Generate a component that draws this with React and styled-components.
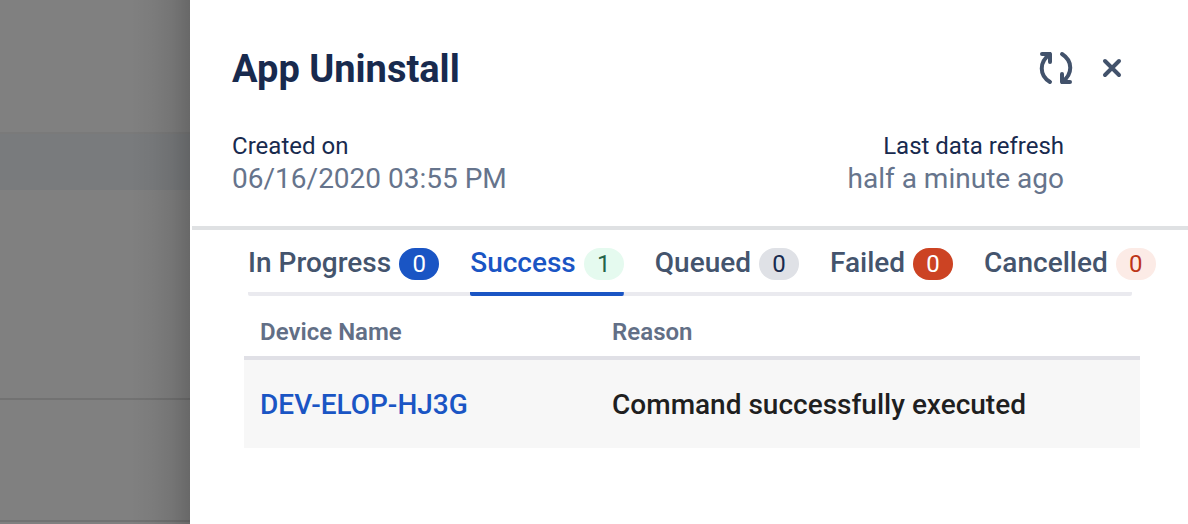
import React from "react";
import styled, { createGlobalStyle } from "styled-components";

const GlobalStyle = createGlobalStyle`
  *, *::before, *::after { box-sizing: border-box; }
  body {
    margin: 0;
    background: #808080;
    font-family: "Roboto", "Liberation Sans", sans-serif;
    color: #1b2a4e;
    overflow-x: hidden;
  }
  h1, p, dl, dd { margin: 0; }
  button { font: inherit; color: inherit; border: 0; padding: 0; background: none; cursor: pointer; }
`;

const Screen = styled.div`
  display: flex;
  min-height: 100vh;
`;

const Backdrop = styled.div`
  position: relative;
  flex: 0 0 16%;
  background: #808080;

  &::after {
    content: "";
    position: absolute;
    inset: 0 0 0 auto;
    width: 60px;
    background: linear-gradient(
      to right,
      rgba(0, 0, 0, 0),
      rgba(0, 0, 0, 0.03) 35%,
      rgba(0, 0, 0, 0.09) 70%,
      rgba(0, 0, 0, 0.19)
    );
  }
`;

const BackdropRow = styled.div`
  height: ${(p) => p.$height}px;
  border-bottom: 2px solid ${(p) => p.$line || "transparent"};
  background: ${(p) => p.$fill || "transparent"};
`;

const Drawer = styled.main`
  flex: 1;
  min-width: 0;
  background: #ffffff;
`;

const Header = styled.header`
  margin-left: 2px;
  padding: 44px 64px 30px 40px;
  border-bottom: 4px solid #dfe1e3;
`;

const TitleBar = styled.div`
  display: flex;
  align-items: flex-start;
  justify-content: space-between;
  height: 48px;
`;

const Title = styled.h1`
  font-size: 38px;
  line-height: 50px;
  font-weight: 700;
  color: #182a4e;
`;

const Actions = styled.div`
  display: flex;
  gap: 24px;
  padding: 4px 0;
  color: #42526b;
`;

const IconButton = styled.button`
  display: flex;
  svg {
    fill: none;
    stroke: currentColor;
    stroke-width: 4;
    stroke-linecap: round;
    stroke-linejoin: round;
  }
`;

const Facts = styled.dl`
  display: flex;
  justify-content: space-between;
  margin-top: 38px;
  padding-right: 60px;
`;

const Fact = styled.div`
  text-align: ${(p) => p.$align || "left"};
  dt { font-size: 24px; line-height: 32px; color: #182a4e; }
  dd { font-size: 28px; line-height: 34px; color: #66748c; }
`;

const Body = styled.div`
  padding: 18px 48px 32px 54px;
`;

const Tabs = styled.div`
  display: flex;
  gap: 31px;
  height: 48px;
  margin: 0 8px 0 4px;
  border-radius: 2px;
  background: linear-gradient(#eaeaef, #eaeaef) bottom / 100% 4px no-repeat;
`;

const Tab = styled.button`
  display: flex;
  align-items: flex-start;
  gap: 8px;
  height: 48px;
  font-size: 28px;
  line-height: 30px;
  font-weight: 500;
  white-space: nowrap;
  color: ${(p) => (p.$active ? "#1a55c4" : "#44546d")};
  background: linear-gradient(currentColor, currentColor) bottom / 100% ${(p) => (p.$active ? 4 : 0)}px no-repeat;
  border-radius: 2px;
`;

const Badge = styled.span`
  min-width: 40px;
  border-radius: 16px;
  font-size: 24px;
  line-height: 32px;
  font-weight: 400;
  text-align: center;
  color: ${(p) => p.$ink};
  background: ${(p) => p.$fill};
`;

const Table = styled.table`
  width: 100%;
  table-layout: fixed;
  border-collapse: separate;
  border-spacing: 0;
  text-align: left;
`;

const HeadCell = styled.th`
  width: ${(p) => p.$width || "auto"};
  height: 64px;
  padding: 20px 16px 8px;
  border-bottom: 4px solid #e0e0e6;
  font-size: 24px;
  line-height: 32px;
  font-weight: 600;
  color: #626f86;
`;

const Cell = styled.td`
  height: 88px;
  padding: 2px 16px 0;
  background: #f7f7f7;
  font-size: 28px;
  line-height: 36px;
  font-weight: 500;
  color: #1f1f1f;
`;

const DeviceLink = styled.a`
  color: #1a55c4;
  text-decoration: none;
`;

const backdropRows = [
  { height: 134, line: "#7a7a7a" },
  { height: 56, fill: "#797b7d" },
  { height: 210, line: "#727272" },
  { height: 122, line: "#727272" },
];

const tabs = [
  { label: "In Progress", count: 0, ink: "#ffffff", fill: "#1a55c4" },
  { label: "Success", count: 1, ink: "#256349", fill: "#e5faef", active: true },
  { label: "Queued", count: 0, ink: "#182a4e", fill: "#dfe1e6" },
  { label: "Failed", count: 0, ink: "#ffffff", fill: "#cc4323" },
  { label: "Cancelled", count: 0, ink: "#bd3518", fill: "#fcebe6" },
];

export default function App() {
  return (
    <>
      <GlobalStyle />
      <Screen>
        <Backdrop aria-hidden="true">
          {backdropRows.map((r) => (
            <BackdropRow key={r.height} $height={r.height} $line={r.line} $fill={r.fill} />
          ))}
        </Backdrop>
        <Drawer>
          <Header>
            <TitleBar>
              <Title>App Uninstall</Title>
              <Actions>
                <IconButton type="button" aria-label="Refresh">
                  <svg width="40" height="40" viewBox="0 0 40 40">
                    <path d="M6 6h8v8M14 6C3 14 3 27 14 34M34 34h-8v-8M26 34C37 26 37 13 26 6" />
                  </svg>
                </IconButton>
                <IconButton type="button" aria-label="Close">
                  <svg width="24" height="40" viewBox="0 0 24 40">
                    <path d="M5 13l14 14M19 13L5 27" />
                  </svg>
                </IconButton>
              </Actions>
            </TitleBar>
            <Facts>
              <Fact>
                <dt>Created on</dt>
                <dd>06/16/2020 03:55 PM</dd>
              </Fact>
              <Fact $align="right">
                <dt>Last data refresh</dt>
                <dd>half a minute ago</dd>
              </Fact>
            </Facts>
          </Header>
          <Body>
            <Tabs role="tablist">
              {tabs.map((t) => (
                <Tab key={t.label} type="button" role="tab" aria-selected={!!t.active} $active={t.active}>
                  {t.label}
                  <Badge $ink={t.ink} $fill={t.fill}>{t.count}</Badge>
                </Tab>
              ))}
            </Tabs>
            <Table>
              <thead>
                <tr>
                  <HeadCell $width="352px">Device Name</HeadCell>
                  <HeadCell>Reason</HeadCell>
                </tr>
              </thead>
              <tbody>
                <tr>
                  <Cell><DeviceLink href="#device">DEV-ELOP-HJ3G</DeviceLink></Cell>
                  <Cell>Command successfully executed</Cell>
                </tr>
              </tbody>
            </Table>
          </Body>
        </Drawer>
      </Screen>
    </>
  );
}
